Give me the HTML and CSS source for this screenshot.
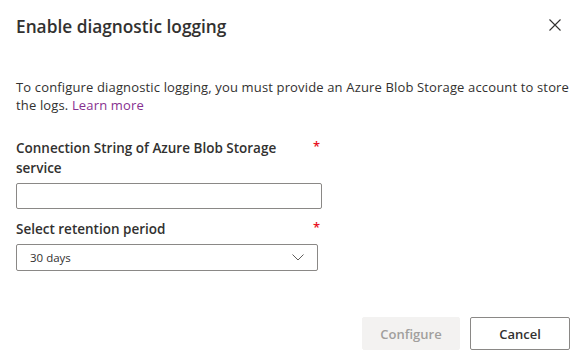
FILE: index.html
```html
<!DOCTYPE html>
<html lang="en">
<head>
  <meta charset="UTF-8" />
  <meta name="viewport" content="width=device-width, initial-scale=1.0" />
  <title>Enable diagnostic logging</title>
  <link rel="stylesheet" href="styles.css">
</head>
<body>
  <div class="dialog">
    <div class="dialog-header">
      <h2 class="dialog-title">Enable diagnostic logging</h2>
      <button class="close-btn" aria-label="Close">
        <svg width="12" height="12" viewBox="0 0 12 12">
          <path d="M0.5 0.5 L11.5 11.5 M11.5 0.5 L0.5 11.5" stroke="#323130" stroke-width="1.1" fill="none"/>
        </svg>
      </button>
    </div>

    <p class="intro">To configure diagnostic logging, you must provide an Azure Blob Storage account to store<br>the logs. <a href="#" class="link">Learn more</a></p>

    <div class="field field-conn">
      <div class="label-row">
        <label class="label">Connection String of Azure Blob Storage service</label>
        <span class="req">*</span>
      </div>
      <input class="text-input" type="text">
    </div>

    <div class="field field-retention">
      <div class="label-row">
        <label class="label">Select retention period</label>
        <span class="req">*</span>
      </div>
      <div class="dropdown">
        <span>30 days</span>
        <svg width="12" height="7" viewBox="0 0 12 7">
          <path d="M0.5 0.5 L6 6 L11.5 0.5" stroke="#605e5c" stroke-width="1" fill="none"/>
        </svg>
      </div>
    </div>

    <div class="footer">
      <button class="btn btn-disabled">Configure</button>
      <button class="btn btn-default">Cancel</button>
    </div>
  </div>
</body>
</html>
```

FILE: styles.css
```css
body {
  margin: 0;
  background: #fff;
  font-family: "Open Sans", "Noto Sans", sans-serif;
  color: #323130;
}
.dialog {
  width: 584px;
  height: 363px;
  padding: 0 14px 0 16px;
  box-sizing: border-box;
}
.dialog-header {
  display: flex;
  justify-content: space-between;
  align-items: center;
  height: 50px;
}
.dialog-title {
  margin: 2px 0 0;
  font-size: 17.3px;
  font-weight: 600;
}
.close-btn {
  border: none;
  background: none;
  padding: 0;
  margin-right: 8px;
  width: 14px;
  height: 14px;
  display: flex;
  align-items: center;
  justify-content: center;
}
.intro {
  margin: 28px -8px 0 0;
  font-size: 13px;
  line-height: 18px;
  letter-spacing: 0.15px;
}
.link {
  color: #86308f;
  text-decoration: none;
}
.field {
  width: 306px;
}
.field-conn {
  margin-top: 24px;
}
.field-retention {
  margin-top: 10px;
}
.label-row {
  display: flex;
  justify-content: space-between;
}
.label {
  font-size: 13.5px;
  font-weight: 600;
  line-height: 20px;
  width: 290px;
}
.req {
  color: #e81123;
  font-size: 13px;
  font-weight: 600;
  line-height: 16px;
  margin-right: 2px;
}
.text-input {
  display: block;
  box-sizing: border-box;
  width: 306px;
  height: 26px;
  margin-top: 5px;
  border: 1px solid #8a8886;
  border-radius: 2px;
}
.dropdown {
  box-sizing: border-box;
  width: 302px;
  height: 27px;
  margin-top: 5px;
  border: 1px solid #8a8886;
  border-radius: 2px;
  display: flex;
  align-items: center;
  justify-content: space-between;
  padding: 0 13px 0 13px;
  font-size: 11.5px;
  color: #323130;
}
.footer {
  display: flex;
  justify-content: flex-end;
  gap: 10px;
  margin-top: 46px;
}
.btn {
  height: 33px;
  border-radius: 2px;
  font-family: inherit;
  font-size: 13px;
  font-weight: 600;
  padding: 0;
}
.btn-disabled {
  width: 98px;
  background: #f3f2f1;
  border: 1px solid #f3f2f1;
  color: #a19f9d;
}
.btn-default {
  width: 100px;
  background: #fff;
  border: 1px solid #8a8886;
  color: #323130;
}
```
